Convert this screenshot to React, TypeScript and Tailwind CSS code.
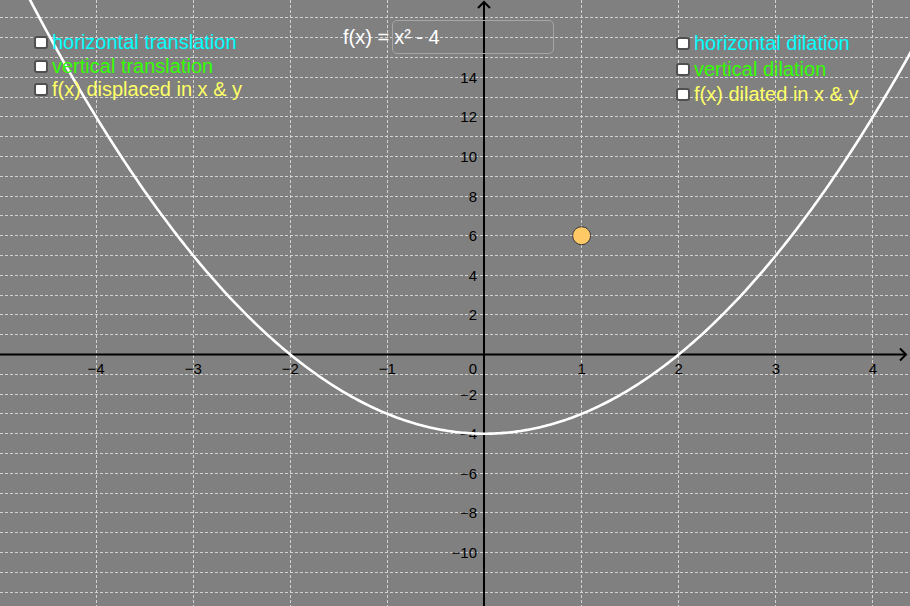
import React from "react";

const OX = 484.5;
const OY = 354.5;
const UX = 97.1;
const UY = 19.8;

const px = (x: number) => OX + x * UX;
const py = (y: number) => OY - y * UY;
const snap = (v: number) => Math.round(v - 0.5) + 0.5;

const xTicks = [-4, -3, -2, -1, 1, 2, 3, 4];
const yGrid = Array.from({ length: 30 }, (_, i) => i - 12).filter((v) => v !== 0);
const yLabels = [14, 12, 10, 8, 6, 4, 2, -2, -4, -6, -8, -10];

function curvePath() {
  const pts: string[] = [];
  for (let i = 0; i <= 400; i++) {
    const x = -5 + (10 * i) / 400;
    const y = x * x - 4;
    pts.push(`${i === 0 ? "M" : "L"}${px(x).toFixed(2)},${py(y).toFixed(2)}`);
  }
  return pts.join(" ");
}

function fmt(n: number) {
  return n < 0 ? `\u2212${-n}` : `${n}`;
}

function Check({ label, color }: { label: string; color: string }) {
  return (
    <div className="flex items-center gap-[4px]">
      <span className="block h-[13px] w-[14px] rounded-[3px] border-2 border-[#505050] bg-white" />
      <span className={color}>{label}</span>
    </div>
  );
}

export default function App() {
  return (
    <div
      className="relative h-[606px] w-[910px] overflow-hidden bg-[#808080]"
      style={{ fontFamily: '"Liberation Sans", Arial, sans-serif' }}
    >
      <svg width={910} height={606} className="absolute inset-0">
        {/* grid */}
        <g stroke="#d2d2d2" strokeWidth={1} strokeDasharray="3 2">
          {xTicks.map((x) => (
            <line key={`vx${x}`} x1={snap(px(x))} x2={snap(px(x))} y1={0} y2={606} />
          ))}
          {yGrid.map((y) => (
            <line key={`hy${y}`} x1={0} x2={910} y1={snap(py(y))} y2={snap(py(y))} />
          ))}
        </g>

        {/* axes */}
        <g stroke="#000" strokeWidth={2} fill="none">
          <line x1={0} x2={906} y1={OY} y2={OY} />
          <line x1={OX - 0.5} x2={OX - 0.5} y1={2} y2={606} />
          <polyline points={`${OX - 6.5},8 ${OX - 0.5},2 ${OX + 5.5},8`} />
          <polyline points={`900,${OY - 6} 906,${OY} 900,${OY + 6}`} />
        </g>

        {/* labels */}
        <g fill="#000" fontSize={15} fontFamily='"Liberation Sans", Arial, sans-serif'>
          {xTicks.map((x) => (
            <text key={`lx${x}`} x={px(x)} y={374} textAnchor="middle">
              {fmt(x)}
            </text>
          ))}
          <text x={477} y={374} textAnchor="end">
            0
          </text>
          {yLabels.map((y) => (
            <text key={`ly${y}`} x={477} y={py(y) + 5.5} textAnchor="end">
              {fmt(y)}
            </text>
          ))}
        </g>

        {/* function */}
        <path d={curvePath()} stroke="#fff" strokeWidth={2.6} fill="none" />

        {/* point */}
        <circle cx={px(1)} cy={py(6)} r={9} fill="#ffc966" stroke="#3a3a3a" strokeWidth={1} />
      </svg>

      {/* input box */}
      <div className="absolute left-[343px] top-[20px] flex items-center text-[20px] text-white">
        <span className="mr-[3px]">f(x) =</span>
        <div className="flex h-[34px] w-[162px] items-center rounded-[5px] border border-[#a6a6a6] pl-[1px]">
          x² - 4
        </div>
      </div>

      {/* left checkboxes */}
      <div className="absolute left-[34px] top-[31px] flex flex-col text-[20px] leading-[23.5px]">
        <Check label="horizontal translation" color="text-[#00ffff]" />
        <Check label="vertical translation" color="text-[#33ff00]" />
        <Check label="f(x) displaced in x & y" color="text-[#ffff66]" />
      </div>

      {/* right checkboxes */}
      <div className="absolute left-[676px] top-[31px] flex flex-col text-[20px] leading-[25.5px]">
        <Check label="horizontal dilation" color="text-[#00ffff]" />
        <Check label="vertical dilation" color="text-[#33ff00]" />
        <Check label="f(x) dilated in x & y" color="text-[#ffff66]" />
      </div>
    </div>
  );
}
